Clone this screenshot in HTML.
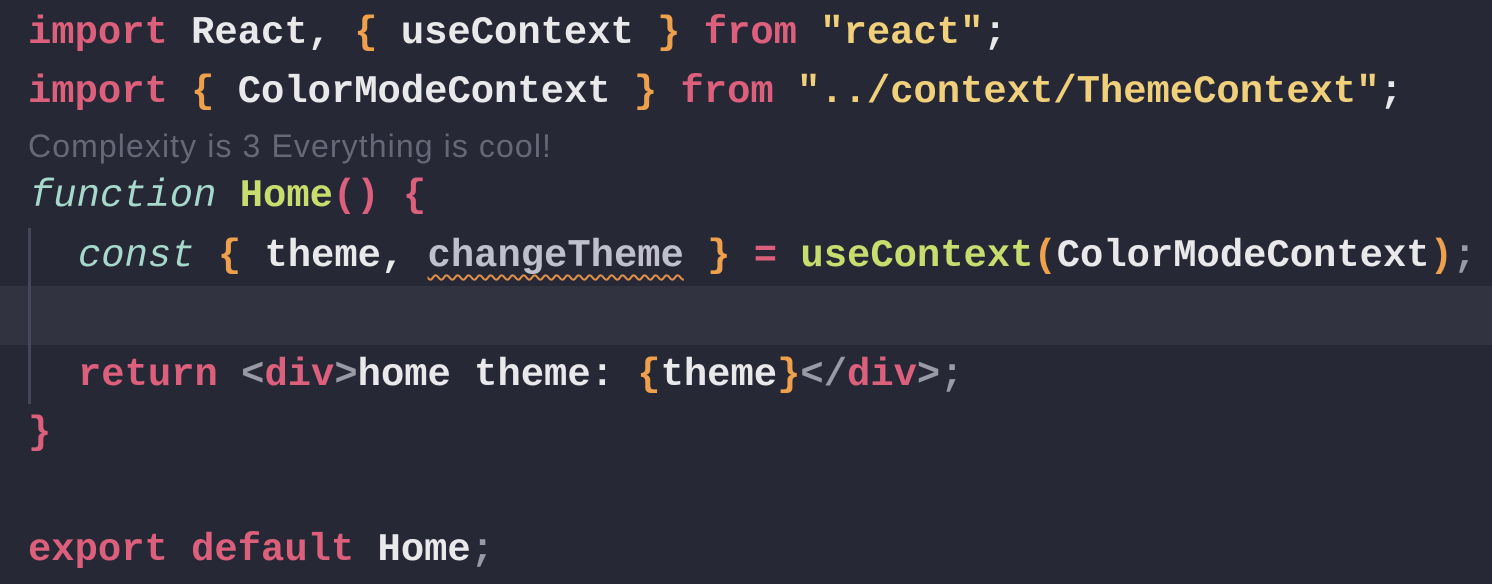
<!DOCTYPE html><html><head><style>
body{margin:0;width:1492px;height:584px;background:#272836;overflow:hidden;position:relative;font-family:"Liberation Mono",monospace;font-size:38.85px;color:#e9e9ec;font-weight:bold}
.l{position:absolute;left:28px;height:59px;line-height:59px;white-space:pre}
.k{color:#dc5f7c}.s{color:#f0d07a}.f{color:#a6d9cb;font-style:italic;font-weight:normal}.g{color:#c9dc6e}.b{color:#eea04c}.p{color:#dc5f7c}.t{color:#9a9aa6}.u{color:#bfc0cc;text-decoration:underline wavy #e0904a;text-decoration-thickness:2px;text-underline-offset:8px}
</style></head><body>
<div style="position:absolute;left:0;top:286px;width:1492px;height:59px;background:#313341"></div>
<div style="position:absolute;left:28px;top:228px;width:3px;height:176px;background:#45475a"></div>
<div class="l" style="top:4px"><span class="k">import</span> React, <span class="b">{</span> useContext <span class="b">}</span> <span class="k">from</span> <span class="s">"react"</span>;</div>
<div class="l" style="top:63px"><span class="k">import</span> <span class="b">{</span> ColorModeContext <span class="b">}</span> <span class="k">from</span> <span class="s">"../context/ThemeContext"</span>;</div>
<div class="l" style="top:129px;height:34px;line-height:34px;font-family:'Liberation Sans',sans-serif;font-size:32px;letter-spacing:1.1px;font-weight:normal;color:#666877">Complexity is 3 Everything is cool!</div>
<div class="l" style="top:167px;left:30px"><span class="f">function</span> <span class="g">Home</span><span class="p">()</span> <span class="p">{</span></div>
<div class="l" style="top:227px;left:78px"><span class="f">const</span> <span class="b">{</span> theme, <span class="u">changeTheme</span> <span class="b">}</span> <span class="p">=</span> <span class="g">useContext</span><span class="b">(</span>ColorModeContext<span class="b">)</span><span class="t">;</span></div>
<div class="l" style="top:346px;left:78px"><span class="k">return</span> <span class="t">&lt;</span><span class="k">div</span><span class="t">&gt;</span>home theme: <span class="b">{</span>theme<span class="b">}</span><span class="t">&lt;/</span><span class="k">div</span><span class="t">&gt;;</span></div>
<div class="l" style="top:404px"><span class="p">}</span></div>
<div class="l" style="top:521px"><span class="k">export</span> <span class="k">default</span> Home<span class="t">;</span></div>
</body></html>
